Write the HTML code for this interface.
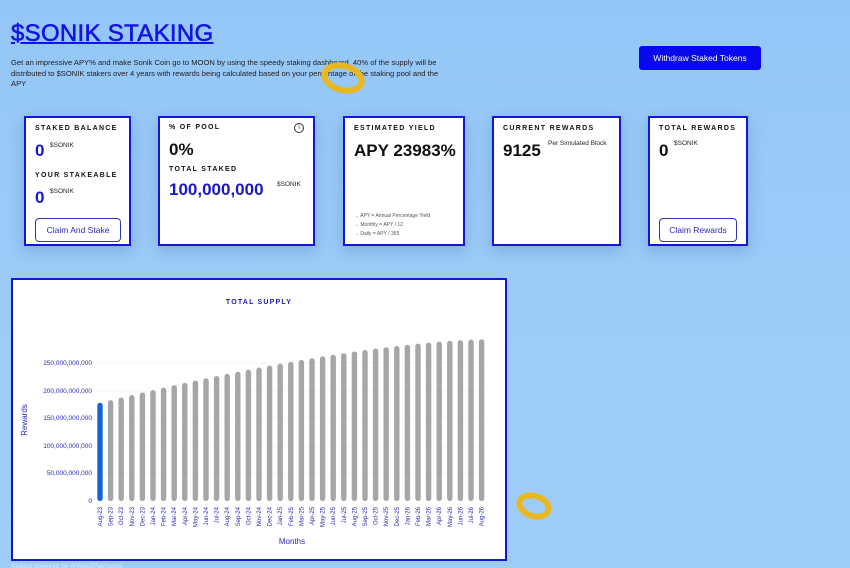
<!DOCTYPE html>
<html><head><meta charset="utf-8"><style>
*{margin:0;padding:0;box-sizing:border-box}
body{width:850px;height:568px;overflow:hidden;position:relative;font-family:"Comic Sans MS","Liberation Sans",sans-serif;background:linear-gradient(180deg,#93c6f7 0%,#9ccbf8 50%,#9fcdf9 100%);color:#111}
.a{position:absolute}
h1{position:absolute;left:11px;top:20px;font-size:24px;font-weight:normal;color:#1414e0;text-decoration:underline;letter-spacing:0.3px;text-decoration-thickness:2px;-webkit-text-stroke:0.6px #1414e0}
.desc{left:11px;top:58px;width:432px;font-size:7.6px;line-height:10.5px;color:#222}
.btn{left:639px;top:46px;width:122px;height:24px;background:#0808ee;border-radius:3px;color:#fff;font-size:8.5px;text-align:center;line-height:24px}
.card{position:absolute;top:116px;height:130px;background:#fff;border:2px solid #1515d8;box-shadow:0 5px 14px rgba(60,100,160,.3)}
.lab{position:absolute;font-size:7px;font-weight:bold;letter-spacing:1.3px;color:#111}
.big{position:absolute;font-size:17px;font-weight:bold}
.blue{color:#1818c8}
.sup{position:absolute;font-size:6.5px;color:#222}
.ob{position:absolute;border:1px solid #3535b0;border-radius:4px;color:#2a2ab0;font-size:8.5px;text-align:center;line-height:22px;height:24px}
.note{position:absolute;font-size:5px;color:#555;line-height:9px}
.chart{left:11px;top:278px;width:496px;height:283px;background:#fff;border:2px solid #1515d8}
</style></head><body>
<h1>$SONIK STAKING</h1>
<div class="a desc">Get an impressive APY% and make Sonik Coin go to MOON by using the speedy staking dashboard. 40% of the supply will be distributed to $SONIK stakers over 4 years with rewards being calculated based on your percentage of the staking pool and the APY</div>
<div class="a btn">Withdraw Staked Tokens</div>

<div class="card" style="left:24px;width:107px">
 <div class="lab" style="left:9px;top:7px">STAKED BALANCE</div>
 <div class="big blue" style="left:9px;top:23px">0</div><div class="sup" style="left:24px;top:24px">$SONIK</div>
 <div class="lab" style="left:9px;top:54px">YOUR STAKEABLE</div>
 <div class="big blue" style="left:9px;top:70px">0</div><div class="sup" style="left:24px;top:70px">$SONIK</div>
 <div class="ob" style="left:9px;top:100px;width:86px">Claim And Stake</div>
</div>
<div class="card" style="left:158px;width:157px">
 <div class="lab" style="left:9px;top:6px">% OF POOL</div>
 <div class="a" style="left:134px;top:5px;width:10px;height:10px;border:1px solid #333;border-radius:50%;font-size:6px;text-align:center;line-height:8px">i</div>
 <div class="big" style="left:9px;top:22px">0%</div>
 <div class="lab" style="left:9px;top:48px">TOTAL STAKED</div>
 <div class="big blue" style="left:9px;top:62px">100,000,000</div><div class="sup" style="left:117px;top:63px">$SONIK</div>
</div>
<div class="card" style="left:343px;width:122px">
 <div class="lab" style="left:9px;top:7px">ESTIMATED YIELD</div>
 <div class="big" style="left:9px;top:23px">APY 23983%</div>
 <div class="note" style="left:9px;top:94px">→ APY = Annual Percentage Yield<br>→ Monthly = APY / 12<br>→ Daily = APY / 365</div>
</div>
<div class="card" style="left:492px;width:129px">
 <div class="lab" style="left:9px;top:7px">CURRENT REWARDS</div>
 <div class="big" style="left:9px;top:23px">9125</div><div class="sup" style="left:54px;top:22px">Per Simulated Block</div>
</div>
<div class="card" style="left:648px;width:100px">
 <div class="lab" style="left:9px;top:7px">TOTAL REWARDS</div>
 <div class="big" style="left:9px;top:23px">0</div><div class="sup" style="left:24px;top:22px">$SONIK</div>
 <div class="ob" style="left:9px;top:100px;width:78px">Claim Rewards</div>
</div>

<div class="a chart"></div>
<svg class="a" style="left:0;top:0" width="850" height="568" font-family="Comic Sans MS, Liberation Sans, sans-serif">
<text x="259" y="304" font-size="7" font-weight="bold" fill="#1818c8" text-anchor="middle" letter-spacing="1.2">TOTAL SUPPLY</text>
<g stroke="#eee" stroke-width="0.6">
<line x1="96" y1="363" x2="488" y2="363"/><line x1="96" y1="391" x2="488" y2="391"/><line x1="96" y1="418" x2="488" y2="418"/><line x1="96" y1="446" x2="488" y2="446"/><line x1="96" y1="473" x2="488" y2="473"/>
</g>
<g fill="#2a2ab8" font-size="6.5" text-anchor="end">
<text x="92" y="365">250,000,000,000</text><text x="92" y="393">200,000,000,000</text><text x="92" y="420">150,000,000,000</text><text x="92" y="448">100,000,000,000</text><text x="92" y="475">50,000,000,000</text><text x="92" y="503">0</text>
</g>
<text transform="translate(27,420) rotate(-90)" font-size="8" fill="#2a2ab8" text-anchor="middle">Rewards</text>
<text x="292" y="544" font-size="8" fill="#2a2ab8" text-anchor="middle">Months</text>
<g fill="#a6a6a6">
<rect x="97.3" y="402.7" width="5.4" height="98.3" rx="2.7" fill="#1466d8"/>
<rect x="107.9" y="400.1" width="5.4" height="100.9" rx="2.7"/>
<rect x="118.5" y="397.5" width="5.4" height="103.5" rx="2.7"/>
<rect x="129.1" y="395" width="5.4" height="106" rx="2.7"/>
<rect x="139.7" y="392.5" width="5.4" height="108.5" rx="2.7"/>
<rect x="150.3" y="390" width="5.4" height="111" rx="2.7"/>
<rect x="160.9" y="387.6" width="5.4" height="113.4" rx="2.7"/>
<rect x="171.5" y="385.1" width="5.4" height="115.9" rx="2.7"/>
<rect x="182.1" y="382.8" width="5.4" height="118.2" rx="2.7"/>
<rect x="192.7" y="380.5" width="5.4" height="120.5" rx="2.7"/>
<rect x="203.3" y="378.2" width="5.4" height="122.8" rx="2.7"/>
<rect x="213.9" y="376" width="5.4" height="125" rx="2.7"/>
<rect x="224.5" y="373.8" width="5.4" height="127.2" rx="2.7"/>
<rect x="235.1" y="371.7" width="5.4" height="129.3" rx="2.7"/>
<rect x="245.7" y="369.6" width="5.4" height="131.4" rx="2.7"/>
<rect x="256.3" y="367.5" width="5.4" height="133.5" rx="2.7"/>
<rect x="266.9" y="365.5" width="5.4" height="135.5" rx="2.7"/>
<rect x="277.5" y="363.6" width="5.4" height="137.4" rx="2.7"/>
<rect x="288.1" y="361.7" width="5.4" height="139.3" rx="2.7"/>
<rect x="298.7" y="359.9" width="5.4" height="141.1" rx="2.7"/>
<rect x="309.3" y="358.1" width="5.4" height="142.9" rx="2.7"/>
<rect x="319.9" y="356.3" width="5.4" height="144.7" rx="2.7"/>
<rect x="330.5" y="354.7" width="5.4" height="146.3" rx="2.7"/>
<rect x="341.1" y="353.1" width="5.4" height="147.9" rx="2.7"/>
<rect x="351.7" y="351.5" width="5.4" height="149.5" rx="2.7"/>
<rect x="362.3" y="350" width="5.4" height="151" rx="2.7"/>
<rect x="372.9" y="348.5" width="5.4" height="152.5" rx="2.7"/>
<rect x="383.5" y="347.2" width="5.4" height="153.8" rx="2.7"/>
<rect x="394.1" y="345.9" width="5.4" height="155.1" rx="2.7"/>
<rect x="404.7" y="344.7" width="5.4" height="156.3" rx="2.7"/>
<rect x="415.3" y="343.6" width="5.4" height="157.4" rx="2.7"/>
<rect x="425.9" y="342.6" width="5.4" height="158.4" rx="2.7"/>
<rect x="436.5" y="341.6" width="5.4" height="159.4" rx="2.7"/>
<rect x="447.1" y="340.8" width="5.4" height="160.2" rx="2.7"/>
<rect x="457.7" y="340.1" width="5.4" height="160.9" rx="2.7"/>
<rect x="468.3" y="339.5" width="5.4" height="161.5" rx="2.7"/>
<rect x="478.9" y="339.3" width="5.4" height="161.7" rx="2.7"/>
</g>
<g fill="#2a2ab8" font-size="6" text-anchor="end">
<text transform="translate(102,507) rotate(-90)">Aug-23</text>
<text transform="translate(112.6,507) rotate(-90)">Sep-23</text>
<text transform="translate(123.2,507) rotate(-90)">Oct-23</text>
<text transform="translate(133.8,507) rotate(-90)">Nov-23</text>
<text transform="translate(144.4,507) rotate(-90)">Dec-23</text>
<text transform="translate(155,507) rotate(-90)">Jan-24</text>
<text transform="translate(165.6,507) rotate(-90)">Feb-24</text>
<text transform="translate(176.2,507) rotate(-90)">Mar-24</text>
<text transform="translate(186.8,507) rotate(-90)">Apr-24</text>
<text transform="translate(197.4,507) rotate(-90)">May-24</text>
<text transform="translate(208,507) rotate(-90)">Jun-24</text>
<text transform="translate(218.6,507) rotate(-90)">Jul-24</text>
<text transform="translate(229.2,507) rotate(-90)">Aug-24</text>
<text transform="translate(239.8,507) rotate(-90)">Sep-24</text>
<text transform="translate(250.4,507) rotate(-90)">Oct-24</text>
<text transform="translate(261,507) rotate(-90)">Nov-24</text>
<text transform="translate(271.6,507) rotate(-90)">Dec-24</text>
<text transform="translate(282.2,507) rotate(-90)">Jan-25</text>
<text transform="translate(292.8,507) rotate(-90)">Feb-25</text>
<text transform="translate(303.4,507) rotate(-90)">Mar-25</text>
<text transform="translate(314,507) rotate(-90)">Apr-25</text>
<text transform="translate(324.6,507) rotate(-90)">May-25</text>
<text transform="translate(335.2,507) rotate(-90)">Jun-25</text>
<text transform="translate(345.8,507) rotate(-90)">Jul-25</text>
<text transform="translate(356.4,507) rotate(-90)">Aug-25</text>
<text transform="translate(367,507) rotate(-90)">Sep-25</text>
<text transform="translate(377.6,507) rotate(-90)">Oct-25</text>
<text transform="translate(388.2,507) rotate(-90)">Nov-25</text>
<text transform="translate(398.8,507) rotate(-90)">Dec-25</text>
<text transform="translate(409.4,507) rotate(-90)">Jan-26</text>
<text transform="translate(420,507) rotate(-90)">Feb-26</text>
<text transform="translate(430.6,507) rotate(-90)">Mar-26</text>
<text transform="translate(441.2,507) rotate(-90)">Apr-26</text>
<text transform="translate(451.8,507) rotate(-90)">May-26</text>
<text transform="translate(462.4,507) rotate(-90)">Jun-26</text>
<text transform="translate(473,507) rotate(-90)">Jul-26</text>
<text transform="translate(483.6,507) rotate(-90)">Aug-26</text>
</g>
<g fill="none">
<ellipse cx="343" cy="78" rx="19" ry="12" stroke="#e8b820" stroke-width="6" transform="rotate(15 343 78)"/>
<ellipse cx="534" cy="506" rx="15" ry="10" stroke="#e8b820" stroke-width="6" transform="rotate(18 534 506)"/>
</g>
<text x="11" y="568" font-size="6.5" fill="#e8f2ff" opacity="0.8">Staking powered by @Web3Payments</text>
</svg>
</body></html>
